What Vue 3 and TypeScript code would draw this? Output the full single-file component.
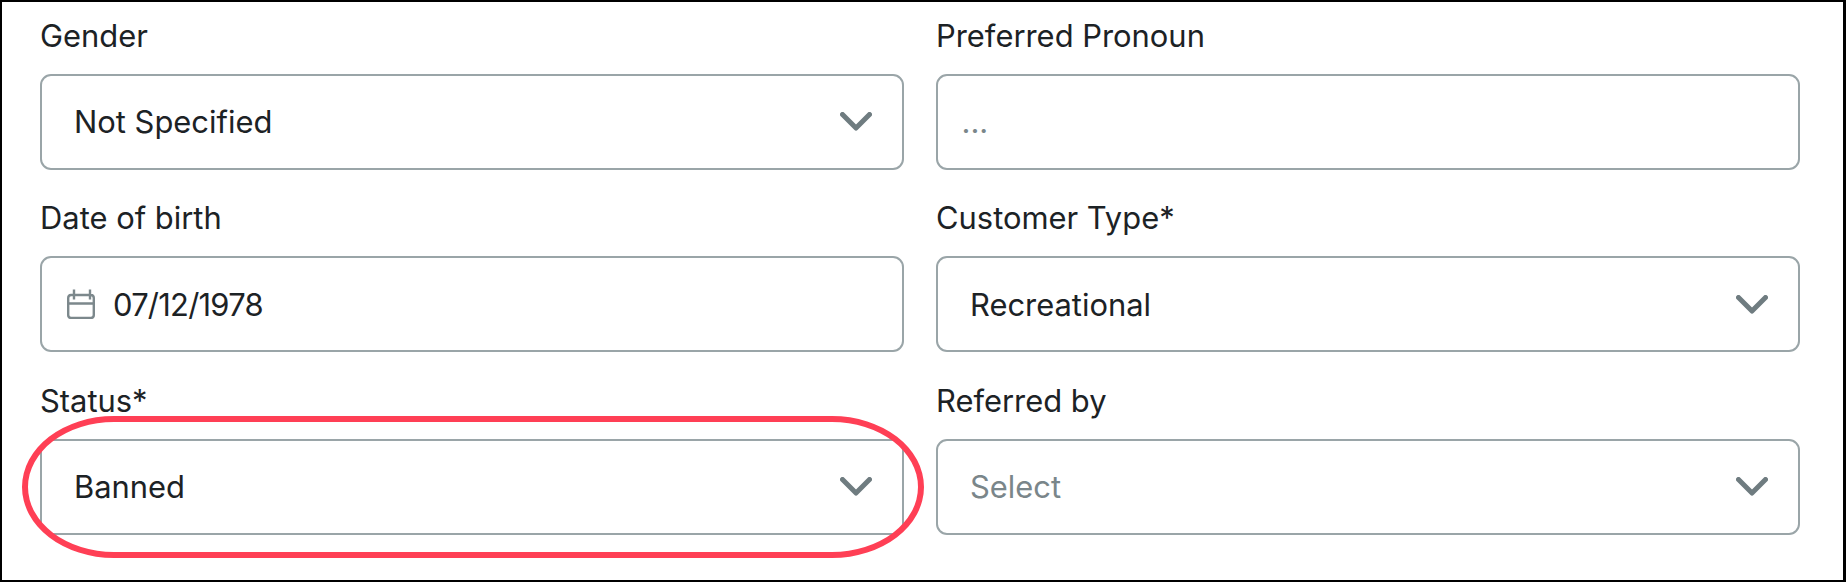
<script setup lang="ts">
interface Field {
  label: string;
  value?: string;
  placeholder?: string;
  kind: 'select' | 'input' | 'date';
  highlighted?: boolean;
}

const fields: Field[] = [
  { label: 'Gender', value: 'Not Specified', kind: 'select' },
  { label: 'Preferred Pronoun', placeholder: '...', kind: 'input' },
  { label: 'Date of birth', value: '07/12/1978', kind: 'date' },
  { label: 'Customer Type*', value: 'Recreational', kind: 'select' },
  { label: 'Status*', value: 'Banned', kind: 'select', highlighted: true },
  { label: 'Referred by', placeholder: 'Select', kind: 'select' },
];
</script>

<template>
  <div class="form-frame">
    <div class="form-grid">
      <div v-for="field in fields" :key="field.label" class="field">
        <label class="field-label">{{ field.label }}</label>
        <div class="control-wrap">
          <div class="control" :class="{ 'control-clipped': field.highlighted }">
            <!-- calendar icon -->
            <svg v-if="field.kind === 'date'" class="calendar" viewBox="0 0 28 30" fill="none">
              <path d="M7 0.5V10.5M23 0.5V10.5M7 6H23M7 6H4A3 3 0 0 0 1.2 9V26A3 3 0 0 0 4 29H24A3 3 0 0 0 26.8 26V9A3 3 0 0 0 24 6H23M1.2 14.5H26.8" stroke="#7c888c" stroke-width="2.4" />
            </svg>
            <span v-if="field.value" class="value" :class="{ 'value-date': field.kind === 'date' }">{{ field.value }}</span>
            <span v-else class="placeholder" :class="{ 'placeholder-dots': field.kind === 'input' }">{{ field.placeholder }}</span>
            <svg v-if="field.kind === 'select'" class="chevron" viewBox="0 0 32 19" fill="none">
              <path d="M2.5 2.5L16 16L29.5 2.5" stroke="#6f7c80" stroke-width="5" stroke-linecap="round" stroke-linejoin="round" />
            </svg>
          </div>
          <!-- red annotation round the status field -->
          <div v-if="field.highlighted" class="highlight"></div>
        </div>
      </div>
    </div>
  </div>
</template>

<style scoped>
.form-frame {
  box-sizing: border-box;
  width: 1846px;
  height: 582px;
  padding: 13.8px 42px 0 38px;
  border: solid #000;
  border-width: 2px 3px 2px 2px;
  background: #fff;
  font-family: Inter, "Liberation Sans", sans-serif;
}

.form-grid {
  display: grid;
  grid-template-columns: 864px 864px;
  column-gap: 32px;
  row-gap: 28.5px;
}

.field-label {
  display: block;
  height: 40px;
  margin-bottom: 18px;
  font-size: 30.9px;
  line-height: 40px;
  color: #1c2225;
}

.control-wrap {
  position: relative;
}

.control {
  box-sizing: border-box;
  display: flex;
  align-items: center;
  height: 96px;
  padding: 0 30px 0 32px;
  border: 2px solid #9aa5a8;
  border-radius: 11px;
  background: #fff;
  font-size: 30.9px;
  color: #1c2225;
}

.control-clipped {
  clip-path: inset(-20px -18px -20px -16px round 90px / 68px);
}

.calendar {
  width: 28px;
  height: 30px;
  margin-left: -7px;
  margin-right: 18px;
  flex: none;
}

.value,
.placeholder {
  flex: 1;
}

.value-date {
  letter-spacing: -0.75px;
}

.placeholder {
  color: #7a868a;
}

.placeholder-dots {
  margin-left: -8.5px;
}

.chevron {
  width: 32px;
  height: 19px;
  flex: none;
}

.highlight {
  position: absolute;
  top: -23px;
  right: -20px;
  bottom: -23px;
  left: -18px;
  border: 6px solid #ff3f55;
  border-radius: 92px / 71px;
  pointer-events: none;
}
</style>
